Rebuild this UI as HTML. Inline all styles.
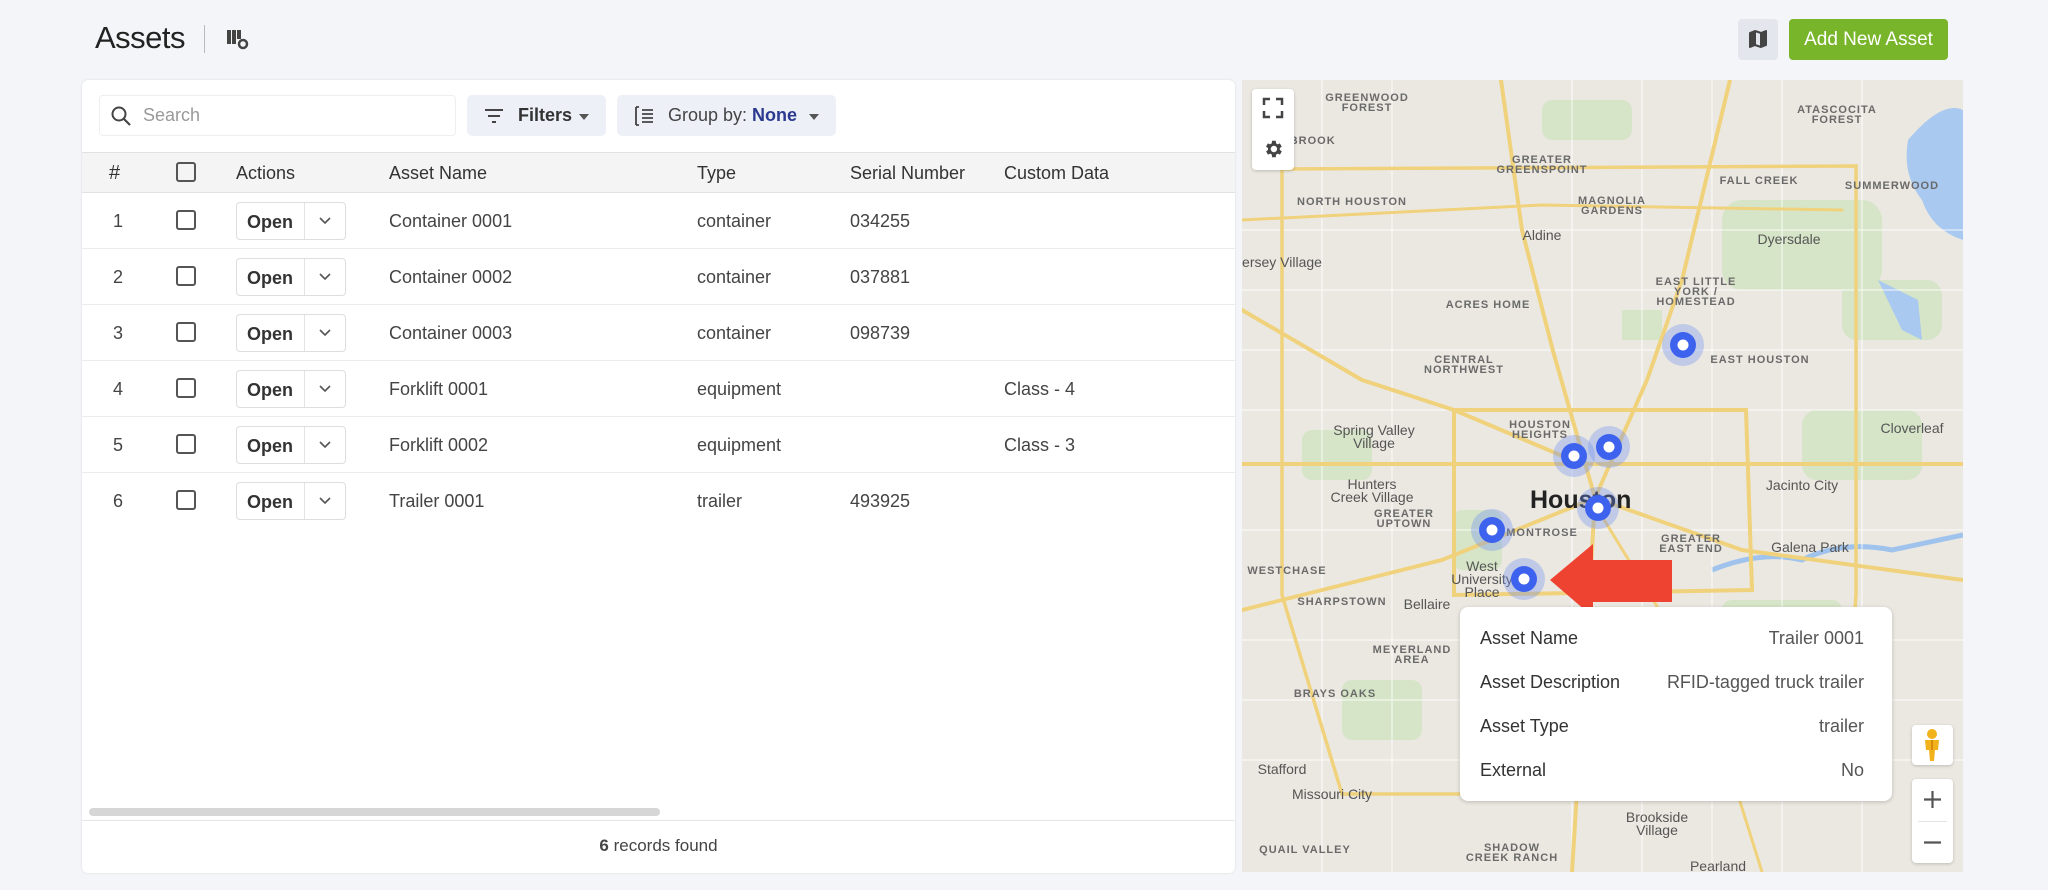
<!DOCTYPE html>
<html><head><meta charset="utf-8"><style>
*{box-sizing:border-box;margin:0;padding:0}
body{width:2048px;height:890px;overflow:hidden;background:#f4f5f8;font-family:"Liberation Sans",sans-serif;color:#333;position:relative}
.abs{position:absolute}
.title{left:95px;top:20px;font-size:31px;color:#222;letter-spacing:-0.5px}
.panel{left:82px;top:80px;width:1153px;height:793px;background:#fff;border-radius:6px;box-shadow:0 0 2px rgba(0,0,0,.12)}
.btn{background:#eef0f8;border-radius:5px;font-size:18px;color:#333}
.row{position:absolute;left:0;width:1153px;height:56px;border-bottom:1px solid #ececec;font-size:18px;color:#444}
.row span{position:absolute;top:18px}
.cb{position:absolute;width:20px;height:20px;border:2px solid #555;border-radius:3px}
.open{position:absolute;left:154px;top:9px;width:110px;height:38px;border:1px solid #ddd;border-radius:4px;background:#fff}
.open b{position:absolute;left:10px;top:9px;font-weight:bold;color:#333;font-size:18px}
.open i{position:absolute;left:67px;top:0;width:1px;height:36px;background:#e3e3e3}
.tt{font-size:18px;position:absolute;left:20px}
.tv{font-size:18px;position:absolute;right:28px;color:#555}
</style></head><body>
<div class="abs title">Assets</div>
<div class="abs" style="left:204px;top:25px;width:1px;height:28px;background:#bbb"></div>
<svg class="abs" style="left:226px;top:29px" width="24" height="22" viewBox="0 0 24 22"><rect x="1" y="1" width="4" height="14" fill="#444"/><rect x="6" y="1" width="4" height="14" fill="#444"/><rect x="11" y="1" width="4" height="9" fill="#444"/><circle cx="17" cy="15" r="4" fill="none" stroke="#444" stroke-width="2.5"/></svg>

<div class="abs" style="left:1738px;top:19px;width:40px;height:41px;background:#e4e6ee;border-radius:4px"></div>
<svg class="abs" style="left:1748px;top:29px" width="20" height="20" viewBox="0 0 20 20"><path d="M2 4 L7 2 L13 4 L18 2 L18 16 L13 18 L7 16 L2 18Z" fill="none" stroke="#444" stroke-width="2" stroke-linejoin="round"/><path d="M7 2 L7 16 M13 4 L13 18" stroke="#444" stroke-width="2"/><path d="M2 4L7 2V16L2 18Z" fill="#444"/><path d="M13 4L18 2V16L13 18Z" fill="#444"/></svg>
<div class="abs" style="left:1789px;top:19px;width:159px;height:41px;background:#79b52a;border-radius:4px;color:#fff;font-size:19px;line-height:41px;text-align:center">Add New Asset</div>

<div class="abs panel">
 <div class="abs" style="left:17px;top:15px;width:357px;height:41px;border:1px solid #eee;border-radius:4px"></div>
 <svg class="abs" style="left:28px;top:25px" width="22" height="22" viewBox="0 0 22 22"><circle cx="9" cy="9" r="6.5" fill="none" stroke="#444" stroke-width="2"/><path d="M14 14 L20 20" stroke="#444" stroke-width="2.2"/></svg>
 <div class="abs" style="left:61px;top:25px;font-size:18px;color:#999">Search</div>
 <div class="abs btn" style="left:385px;top:15px;width:139px;height:41px"></div>
 <svg class="abs" style="left:402px;top:28px" width="20" height="16"><path d="M1 2H19M4 8H16M8 14H12" stroke="#444" stroke-width="2"/></svg>
 <div class="abs" style="left:436px;top:25px;font-size:18px;font-weight:bold;color:#333">Filters</div>
 <div class="abs" style="left:497px;top:34px;border:5px solid transparent;border-top:6px solid #555"></div>
 <div class="abs btn" style="left:535px;top:15px;width:219px;height:41px"></div>
 <svg class="abs" style="left:552px;top:26px" width="20" height="20"><path d="M2 1V19M2 1H5M2 19H5M8 4H19M8 8H19M8 12H19M8 16H19" stroke="#444" stroke-width="1.8" fill="none"/></svg>
 <div class="abs" style="left:586px;top:25px;font-size:18px;color:#444">Group by: <b style="color:#2b3a8f">None</b></div>
 <div class="abs" style="left:727px;top:34px;border:5px solid transparent;border-top:6px solid #555"></div>

 <div class="abs" style="left:0;top:72px;width:1153px;height:41px;background:#f4f4f4;border-top:1px solid #e2e2e2;border-bottom:1px solid #e2e2e2;font-size:18px;color:#333">
  <span class="abs" style="left:27px;top:9px;font-size:20px">#</span>
  <div class="cb" style="left:94px;top:9px"></div>
  <span class="abs" style="left:154px;top:10px">Actions</span>
  <span class="abs" style="left:307px;top:10px">Asset Name</span>
  <span class="abs" style="left:615px;top:10px">Type</span>
  <span class="abs" style="left:768px;top:10px">Serial Number</span>
  <span class="abs" style="left:922px;top:10px">Custom Data</span>
 </div>
 <div class="row" style="top:113px"><span style="left:31px">1</span><div class="cb" style="left:94px;top:17px"></div><div class="open"><b>Open</b><i></i><svg class="abs" style="left:82px;top:14px" width="12" height="8"><path d="M1 1L6 6L11 1" stroke="#555" stroke-width="1.6" fill="none"/></svg></div><span style="left:307px">Container 0001</span><span style="left:615px">container</span><span style="left:768px">034255</span></div>
 <div class="row" style="top:169px"><span style="left:31px">2</span><div class="cb" style="left:94px;top:17px"></div><div class="open"><b>Open</b><i></i><svg class="abs" style="left:82px;top:14px" width="12" height="8"><path d="M1 1L6 6L11 1" stroke="#555" stroke-width="1.6" fill="none"/></svg></div><span style="left:307px">Container 0002</span><span style="left:615px">container</span><span style="left:768px">037881</span></div>
 <div class="row" style="top:225px"><span style="left:31px">3</span><div class="cb" style="left:94px;top:17px"></div><div class="open"><b>Open</b><i></i><svg class="abs" style="left:82px;top:14px" width="12" height="8"><path d="M1 1L6 6L11 1" stroke="#555" stroke-width="1.6" fill="none"/></svg></div><span style="left:307px">Container 0003</span><span style="left:615px">container</span><span style="left:768px">098739</span></div>
 <div class="row" style="top:281px"><span style="left:31px">4</span><div class="cb" style="left:94px;top:17px"></div><div class="open"><b>Open</b><i></i><svg class="abs" style="left:82px;top:14px" width="12" height="8"><path d="M1 1L6 6L11 1" stroke="#555" stroke-width="1.6" fill="none"/></svg></div><span style="left:307px">Forklift 0001</span><span style="left:615px">equipment</span><span style="left:922px">Class - 4</span></div>
 <div class="row" style="top:337px"><span style="left:31px">5</span><div class="cb" style="left:94px;top:17px"></div><div class="open"><b>Open</b><i></i><svg class="abs" style="left:82px;top:14px" width="12" height="8"><path d="M1 1L6 6L11 1" stroke="#555" stroke-width="1.6" fill="none"/></svg></div><span style="left:307px">Forklift 0002</span><span style="left:615px">equipment</span><span style="left:922px">Class - 3</span></div>
 <div class="row" style="top:393px;border-bottom:none"><span style="left:31px">6</span><div class="cb" style="left:94px;top:17px"></div><div class="open"><b>Open</b><i></i><svg class="abs" style="left:82px;top:14px" width="12" height="8"><path d="M1 1L6 6L11 1" stroke="#555" stroke-width="1.6" fill="none"/></svg></div><span style="left:307px">Trailer 0001</span><span style="left:615px">trailer</span><span style="left:768px">493925</span></div>
 <div class="abs" style="left:7px;top:728px;width:571px;height:8px;background:#d6d6d6;border-radius:4px"></div>
 <div class="abs" style="left:0;top:740px;width:1153px;height:1px;background:#e6e6e6"></div>
 <div class="abs" style="left:0;top:756px;width:1153px;text-align:center;font-size:17px;color:#444"><b>6</b> records found</div>
</div>

<svg class="abs" style="left:1242px;top:80px" width="721" height="792" viewBox="0 0 721 792" font-family="Liberation Sans, sans-serif">
 <rect width="721" height="792" fill="#ebe8e1"/>
 <g fill="#d6e5c8">
  <rect x="480" y="120" width="160" height="90" rx="20"/><rect x="560" y="330" width="120" height="70" rx="15"/><rect x="60" y="350" width="70" height="50" rx="10"/><rect x="210" y="430" width="50" height="60" rx="10"/><rect x="300" y="20" width="90" height="40" rx="10"/><rect x="600" y="200" width="100" height="60" rx="15"/><rect x="380" y="230" width="40" height="30"/><rect x="480" y="520" width="120" height="50" rx="10"/><rect x="100" y="600" width="80" height="60" rx="10"/>
 </g>
 <path d="M666 60 Q700 20 721 30 L721 160 Q690 150 680 120 Q660 95 666 60Z" fill="#a9c9f0"/>
 <path d="M636 200 L676 220 L680 260 L660 250Z" fill="#a9c9f0"/>
 <path d="M470 490 Q520 470 560 480 Q600 460 650 470 L721 455" stroke="#9fc3ec" stroke-width="5" fill="none"/>
 <g stroke="#fff" stroke-width="1.2" opacity=".7">
  <path d="M0 150H721M0 210H721M0 270H721M0 330H721M0 450H721M0 560H721M0 620H721M0 680H721M80 0V792M150 0V792M330 0V792M400 0V792M470 0V792M540 0V792M620 0V792"/>
 </g>
 <g stroke="#f0d27c" stroke-width="4" fill="none" stroke-linecap="round">
  <path d="M212 330 L504 330 L510 510 L212 515 Z"/>
  <path d="M40 89 L614 86 L614 515 L600 714 L100 714 L40 515 Z" stroke-width="3.5"/>
  <path d="M259 0 L280 150 L311 271 L353 418 L350 470 L330 792"/>
  <path d="M0 384 L721 384"/>
  <path d="M488 0 L440 200 L405 300 L353 418"/>
  <path d="M0 230 L120 300 L212 330 L330 380"/>
  <path d="M353 418 L200 480 L0 530"/>
  <path d="M353 418 L500 470 L721 500"/>
  <path d="M0 140 L300 125 L600 130" stroke-width="3"/>
  <path d="M350 420 L460 600 L520 792" stroke-width="3"/>
 </g>
 <g fill="#6a6a6a" font-size="11" font-weight="bold" letter-spacing="1" text-anchor="middle">
  <text x="125" y="21">GREENWOOD</text><text x="125" y="31">FOREST</text>
  <text x="65" y="64">WBROOK</text>
  <text x="300" y="83">GREATER</text><text x="300" y="93">GREENSPOINT</text>
  <text x="110" y="125">NORTH HOUSTON</text>
  <text x="370" y="124">MAGNOLIA</text><text x="370" y="134">GARDENS</text>
  <text x="517" y="104">FALL CREEK</text><text x="650" y="109">SUMMERWOOD</text>
  <text x="595" y="33">ATASCOCITA</text><text x="595" y="43">FOREST</text>
  <text x="246" y="228">ACRES HOME</text>
  <text x="454" y="205">EAST LITTLE</text><text x="454" y="215">YORK /</text><text x="454" y="225">HOMESTEAD</text>
  <text x="222" y="283">CENTRAL</text><text x="222" y="293">NORTHWEST</text>
  <text x="518" y="283">EAST HOUSTON</text>
  <text x="298" y="348">HOUSTON</text><text x="298" y="358">HEIGHTS</text>
  <text x="162" y="437">GREATER</text><text x="162" y="447">UPTOWN</text>
  <text x="300" y="456">MONTROSE</text>
  <text x="449" y="462">GREATER</text><text x="449" y="472">EAST END</text>
  <text x="45" y="494">WESTCHASE</text><text x="100" y="525">SHARPSTOWN</text>
  <text x="170" y="573">MEYERLAND</text><text x="170" y="583">AREA</text>
  <text x="93" y="617">BRAYS OAKS</text><text x="63" y="773">QUAIL VALLEY</text>
  <text x="270" y="771">SHADOW</text><text x="270" y="781">CREEK RANCH</text>
 </g>
 <g fill="#555" font-size="14" text-anchor="middle">
  <text x="300" y="160">Aldine</text><text x="547" y="164">Dyersdale</text><text x="40" y="187">ersey Village</text>
  <text x="132" y="355">Spring Valley</text><text x="132" y="368">Village</text>
  <text x="130" y="409">Hunters</text><text x="130" y="422">Creek Village</text>
  <text x="670" y="353">Cloverleaf</text><text x="560" y="410">Jacinto City</text><text x="568" y="472">Galena Park</text>
  <text x="240" y="491">West</text><text x="240" y="504">University</text><text x="240" y="517">Place</text>
  <text x="185" y="529">Bellaire</text><text x="40" y="694">Stafford</text><text x="90" y="719">Missouri City</text>
  <text x="415" y="742">Brookside</text><text x="415" y="755">Village</text><text x="476" y="791">Pearland</text>
 </g>
 <text x="288" y="428" font-size="25" font-weight="bold" fill="#222">Houston</text>
 <g>
  <g transform="translate(441,265)"><circle r="21" fill="#6f8ff0" opacity=".35"/><circle r="13" fill="#3d62ee"/><circle r="5.5" fill="#fff"/></g>
  <g transform="translate(332,376)"><circle r="21" fill="#6f8ff0" opacity=".35"/><circle r="13" fill="#3d62ee"/><circle r="5.5" fill="#fff"/></g>
  <g transform="translate(367,367)"><circle r="21" fill="#6f8ff0" opacity=".35"/><circle r="13" fill="#3d62ee"/><circle r="5.5" fill="#fff"/></g>
  <g transform="translate(356,428)"><circle r="21" fill="#6f8ff0" opacity=".35"/><circle r="13" fill="#3d62ee"/><circle r="5.5" fill="#fff"/></g>
  <g transform="translate(250,450)"><circle r="21" fill="#6f8ff0" opacity=".35"/><circle r="13" fill="#3d62ee"/><circle r="5.5" fill="#fff"/></g>
  <g transform="translate(282,499)"><circle r="21" fill="#6f8ff0" opacity=".35"/><circle r="13" fill="#3d62ee"/><circle r="5.5" fill="#fff"/></g>
 </g>
 <path d="M308 500 L351 464 L351 480 L430 480 L430 522 L351 522 L351 537 Z" fill="#ee4330"/>
</svg>

<div class="abs" style="left:1252px;top:89px;width:42px;height:81px;background:#fff;border-radius:4px;box-shadow:0 1px 3px rgba(0,0,0,.2)"></div>
<svg class="abs" style="left:1262px;top:97px" width="22" height="22"><path d="M2 8V2H8M14 2H20V8M20 14V20H14M8 20H2V14" stroke="#444" stroke-width="2.5" fill="none"/></svg>
<svg class="abs" style="left:1262px;top:138px" width="22" height="22" viewBox="0 0 24 24"><path fill="#444" d="M19.4 13a7.5 7.5 0 000-2l2.1-1.6-2-3.5-2.5 1a7 7 0 00-1.7-1L15 3h-4l-.4 2.9a7 7 0 00-1.7 1l-2.5-1-2 3.5L6.6 11a7.5 7.5 0 000 2l-2.1 1.6 2 3.5 2.5-1a7 7 0 001.7 1L11 21h4l.4-2.9a7 7 0 001.7-1l2.5 1 2-3.5zM13 15.5a3.5 3.5 0 110-7 3.5 3.5 0 010 7z"/></svg>

<div class="abs" style="left:1460px;top:607px;width:432px;height:194px;background:#fff;border-radius:8px;box-shadow:0 1px 4px rgba(0,0,0,.2)">
 <div class="tt" style="top:21px;color:#333">Asset Name</div><div class="tv" style="top:21px">Trailer 0001</div>
 <div class="tt" style="top:65px;color:#333">Asset Description</div><div class="tv" style="top:65px">RFID-tagged truck trailer</div>
 <div class="tt" style="top:109px;color:#333">Asset Type</div><div class="tv" style="top:109px">trailer</div>
 <div class="tt" style="top:153px;color:#333">External</div><div class="tv" style="top:153px">No</div>
</div>

<div class="abs" style="left:1912px;top:725px;width:41px;height:40px;background:#fff;border-radius:4px;box-shadow:0 1px 3px rgba(0,0,0,.2)"></div>
<svg class="abs" style="left:1922px;top:728px" width="20" height="34" viewBox="0 0 20 34"><circle cx="10" cy="6" r="5" fill="#f2b21b"/><path d="M3 12H17L16 22H13L12 33H8L7 22H4Z" fill="#f2b21b"/><path d="M9 12H11V22H9Z" fill="#d88a0c"/></svg>
<div class="abs" style="left:1912px;top:779px;width:41px;height:84px;background:#fff;border-radius:4px;box-shadow:0 1px 3px rgba(0,0,0,.2)"></div>
<div class="abs" style="left:1918px;top:821px;width:29px;height:1px;background:#e3e3e3"></div>
<svg class="abs" style="left:1922px;top:789px" width="21" height="21"><path d="M10.5 2V19M2 10.5H19" stroke="#555" stroke-width="2.2"/></svg>
<svg class="abs" style="left:1922px;top:832px" width="21" height="21"><path d="M2 10.5H19" stroke="#555" stroke-width="2.2"/></svg>
</body></html>
